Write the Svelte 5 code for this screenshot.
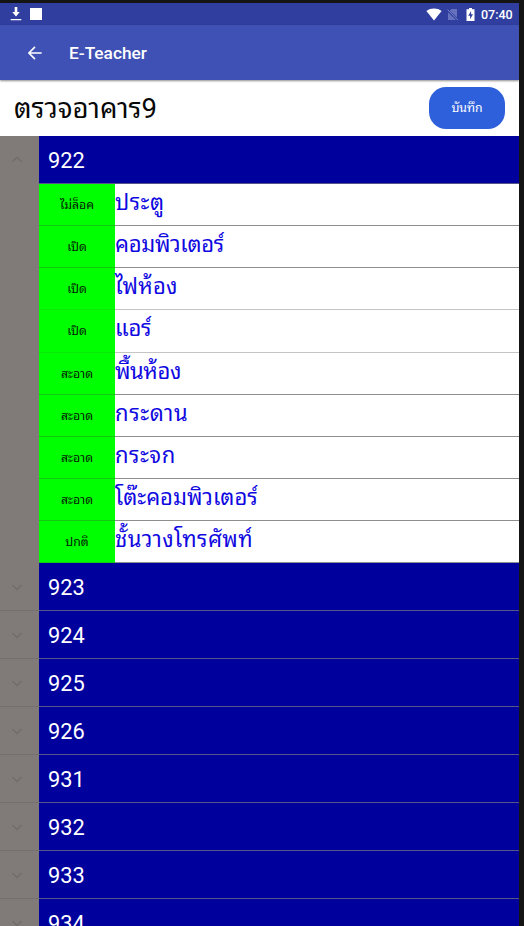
<script>
  const items = [
    { state: 'ไม่ล็อค', name: 'ประตู', tracking: 0.5 },
    { state: 'เปิด', name: 'คอมพิวเตอร์', tracking: -0.3 },
    { state: 'เปิด', name: 'ไฟห้อง', tracking: 0.2, light: true },
    { state: 'เปิด', name: 'แอร์', tracking: -0.3, tall: true, light: true },
    { state: 'สะอาด', name: 'พื้นห้อง', tracking: -0.4 },
    { state: 'สะอาด', name: 'กระดาน', tracking: 0.65 },
    { state: 'สะอาด', name: 'กระจก', tracking: 0.5 },
    { state: 'สะอาด', name: 'โต๊ะคอมพิวเตอร์', tracking: 0 },
    { state: 'ปกติ', name: 'ชั้นวางโทรศัพท์', tracking: 0.42 }
  ];
  const rooms = ['922', '923', '924', '925', '926', '931', '932', '933', '934'];
  let open = $state('922');
</script>

<div class="frame">
  <div class="screen">
    <div class="status">
      <svg class="download" width="12" height="14" viewBox="0 0 12 14">
        <path d="M4.700 0h2.600v5h2.500L6 9.500 2.200 5h2.500zM.7 12h10.600v1.300H.7z" fill="#fff" />
      </svg>
      <span class="square"></span>
      <span class="grow"></span>
      <svg class="wifi" width="16" height="13" viewBox="0 0 16 13">
        <path d="M8 12.400.4 3C4.400-.3 11.600-.3 15.600 3z" fill="#fff" />
      </svg>
      <svg class="sim" width="12" height="13" viewBox="0 0 12 13">
        <path d="M4.500 1H10v8.600L2.700 2.800zM1 4.200 9 12H1z" fill="#6672bd" />
        <path d="M.5 1.500l10.500 10.700" stroke="#7480c3" stroke-width="1" />
      </svg>
      <svg class="battery" width="9" height="13" viewBox="0 0 9 13">
        <path d="M3 0h3v1.300h2.500V13H.5V1.300H3z" fill="#fff" />
        <path d="M5.100 3 2.200 7.700h1.900v3.500l2.900-4.900H5.100z" fill="#303f9f" />
      </svg>
      <span class="clock">07:40</span>
    </div>
    <header>
      <svg width="14" height="14" viewBox="0 0 14 14" fill="none" stroke="#fff" stroke-width="1.600">
        <path d="M13.700 7H1.200M7 .9.900 7 7 13.100" />
      </svg>
      <h1>E-Teacher</h1>
    </header>
    <div class="heading">
      <h2>ตรวจอาคาร9</h2>
      <button class="save">บันทึก</button>
    </div>
    <main>
      {#each rooms as room}
        <section>
          <div class="gutter" class:expanded={open === room}>
            <button class="toggle" aria-label={room} onclick={() => (open = open === room ? '' : room)}>
              <svg width="12" height="8" viewBox="0 0 12 8" fill="none" stroke="#716d6b" stroke-width="1.500">
                <path d={open === room ? 'M1.500 5.500 6 1.500l4.500 4' : 'M1.500 2 6 6.500l4.500-4.500'} />
              </svg>
            </button>
          </div>
          <div class="content">
            <div class="room">{room}</div>
            {#if open === room}
              {#each items as item}
                <div class="item" class:tall={item.tall} class:light={item.light}>
                  <div class="state">{item.state}</div>
                  <div class="name" style="letter-spacing: {item.tracking}px">{item.name}</div>
                </div>
              {/each}
            {/if}
          </div>
        </section>
      {/each}
    </main>
  </div>
</div>

<style>
  :global(body) { margin: 0; overflow: hidden; }
  .frame {
    box-sizing: border-box;
    width: 524px;
    height: 926px;
    padding: 3px 5px 0 0;
    background: #141414;
    overflow: hidden;
    font-family: Roboto, 'Noto Sans Thai Looped', 'Noto Looped Thai', 'Droid Sans Thai', Loma, Garuda, Umpush, Laksaman, Waree, Tahoma, 'Noto Serif Thai', FreeSans, FreeSerif, sans-serif;
  }
  .screen {
    display: flex;
    flex-direction: column;
    height: 923px;
    background: #fff;
    overflow: hidden;
  }
  .status {
    box-sizing: border-box;
    display: flex;
    align-items: center;
    flex: 0 0 22px;
    padding: 0 7px 0 10px;
    background: #303f9f;
    color: #fff;
  }
  .square { width: 12px; height: 12px; margin-left: 8px; background: #fff; }
  .grow { flex: 1; }
  .sim { margin-left: 5px; }
  .battery { margin-left: 7px; }
  .clock {
    width: 31px;
    margin-left: 6px;
    padding-top: 1px;
    font-size: 12.500px;
    font-weight: 500;
    line-height: 20px;
    white-space: nowrap;
  }
  header {
    display: flex;
    align-items: center;
    flex: 0 0 55px;
    padding-left: 28px;
    background: #3f51b5;
    color: #fff;
    box-shadow: 0 1px 2px rgba(0, 0, 0, .45);
    z-index: 1;
  }
  h1 { margin: 0 0 0 27px; font-size: 17.300px; line-height: 22px; font-weight: 500; }
  .heading {
    box-sizing: border-box;
    display: flex;
    align-items: center;
    justify-content: space-between;
    flex: 0 0 56px;
    padding: 0 14px;
  }
  h2 { margin: 0; padding-top: 2px; font-size: 27.500px; font-weight: 400; line-height: 40px; color: #080808; }
  .save {
    width: 76px;
    height: 42px;
    padding: 0;
    border: 0;
    border-radius: 17px;
    background: #2f60db;
    color: #fff;
    font: inherit;
    font-size: 12.300px;
    line-height: 40px;
  }
  section { display: flex; }
  .gutter { flex: 0 0 39px; box-sizing: border-box; background: #807b79; border-bottom: 1px solid #74706f; }
  .expanded { border-bottom-color: #807b79; }
  .toggle {
    display: flex;
    width: 33px;
    height: 47px;
    padding: 0;
    border: 0;
    background: none;
    align-items: center;
    justify-content: center;
  }
  .content { flex: 1; }
  .room {
    box-sizing: border-box;
    height: 48px;
    padding-left: 9px;
    border-bottom: 1px solid #55558a;
    background: #00009d;
    color: #fff;
    font-size: 21.800px;
    line-height: 50px;
  }
  .item { display: flex; height: 42px; overflow: hidden; }
  .tall { height: 43px; }
  .state {
    box-sizing: border-box;
    flex: 0 0 76px;
    border-bottom: 1px solid #14c814;
    background: #0f0;
    color: #031a03;
    font-size: 12.300px;
    line-height: 42px;
    text-align: center;
  }
  .name {
    box-sizing: border-box;
    flex: 1;
    border-bottom: 1px solid #8e8e8e;
    color: #1008e0;
    font-size: 22px;
    line-height: 37px;
    white-space: nowrap;
  }
  .light .name { border-bottom-color: #c4c4c4; }
  .light .state { border-bottom-color: #0be80b; }
</style>
